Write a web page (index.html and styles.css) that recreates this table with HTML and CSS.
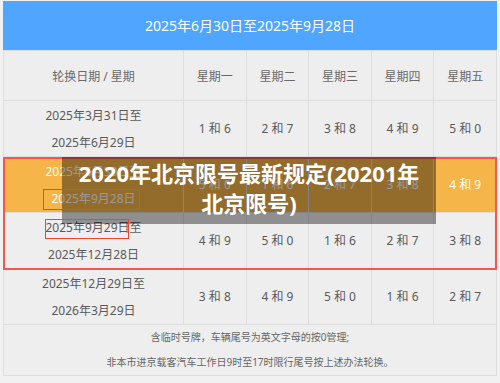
FILE: index.html
```html
<!DOCTYPE html>
<html lang="zh-CN">
<head>
<meta charset="utf-8">
<title>北京限号</title>
<link rel="stylesheet" href="styles.css">
</head>
<body>
<div class="wrap">
  <div class="banner">2025年6月30日至2025年9月28日</div>
  <table class="grid">
    <colgroup>
      <col class="c-date"><col><col><col><col><col>
    </colgroup>
    <thead>
      <tr class="head-row">
        <th>轮换日期 / 星期</th><th>星期一</th><th>星期二</th><th>星期三</th><th>星期四</th><th>星期五</th>
      </tr>
    </thead>
    <tbody>
      <tr>
        <td>2025年3月31日至<br>2025年6月29日</td><td>1 和 6</td><td>2 和 7</td><td>3 和 8</td><td>4 和 9</td><td>5 和 0</td>
      </tr>
      <tr class="current">
        <td>2025年6月30日至<br>2025年9月28日</td><td>5 和 0</td><td>1 和 6</td><td>2 和 7</td><td>3 和 8</td><td>4 和 9</td>
      </tr>
      <tr>
        <td>2025年9月29日至<br>2025年12月28日</td><td>4 和 9</td><td>5 和 0</td><td>1 和 6</td><td>2 和 7</td><td>3 和 8</td>
      </tr>
      <tr>
        <td>2025年12月29日至<br>2026年3月29日</td><td>3 和 8</td><td>4 和 9</td><td>5 和 0</td><td>1 和 6</td><td>2 和 7</td>
      </tr>
      <tr class="note-row">
        <td colspan="6">含临时号牌，车辆尾号为英文字母的按0管理;<br>非本市进京载客汽车工作日9时至17时限行尾号按上述办法轮换。</td>
      </tr>
    </tbody>
  </table>

  <div class="mark mark-big"></div>
  <div class="caption">2020年北京限号最新规定(20201年<span class="nw">北京限号)</span></div>
  <div class="mark mark-a"></div>
  <div class="mark mark-b"></div>
</div>
</body>
</html>
```

FILE: styles.css
```css
html, body {
  margin: 0;
  padding: 0;
  background: #f1f1f1;
}
body {
  padding: 1px 3px 0 3px;
  font-family: "Noto Sans", "Noto Sans CJK SC", sans-serif;
}
.wrap {
  position: relative;
  width: 494px;
}
.banner {
  height: 49px;
  line-height: 49px;
  background: #50a6fe;
  color: #fff;
  font-size: 14px;
  text-align: center;
}
.grid {
  width: 494px;
  border-collapse: collapse;
  table-layout: fixed;
  background: #eeeeee;
  color: #5a5a5a;
  font-size: 12px;
  text-align: center;
}
.c-date {
  width: 180px;
}
.grid th, .grid td {
  border: 1px solid #dddddd;
  padding: 0;
  font-weight: normal;
  vertical-align: middle;
}
.head-row th {
  height: 49px;
  color: #6a6a6a;
}
.grid tbody td {
  height: 55px;
  line-height: 27px;
}
.grid .current td {
  background: #f6b548;
  color: #ffffff;
}
.grid .note-row td {
  height: 50px;
  line-height: 25px;
  font-size: 10px;
  color: #666;
}
.mark {
  position: absolute;
  box-sizing: border-box;
  border: 1.5px solid #f0443a;
}
.mark-big {
  left: 0;
  top: 156px;
  width: 494px;
  height: 113px;
  border: 2px solid #f5564d;
}
.mark-a {
  left: 40px;
  top: 188px;
  width: 97px;
  height: 21px;
}
.mark-b {
  left: 42px;
  top: 218px;
  width: 84px;
  height: 20px;
}
.caption {
  position: absolute;
  left: 59px;
  top: 156px;
  width: 374px;
  height: 67px;
  box-sizing: border-box;
  padding: 1px 4px 0;
  background: rgba(0, 0, 0, 0.4);
  color: #ffffff;
  font-size: 22px;
  font-weight: bold;
  line-height: 30px;
  text-align: center;
}
.nw {
  white-space: nowrap;
}
```
